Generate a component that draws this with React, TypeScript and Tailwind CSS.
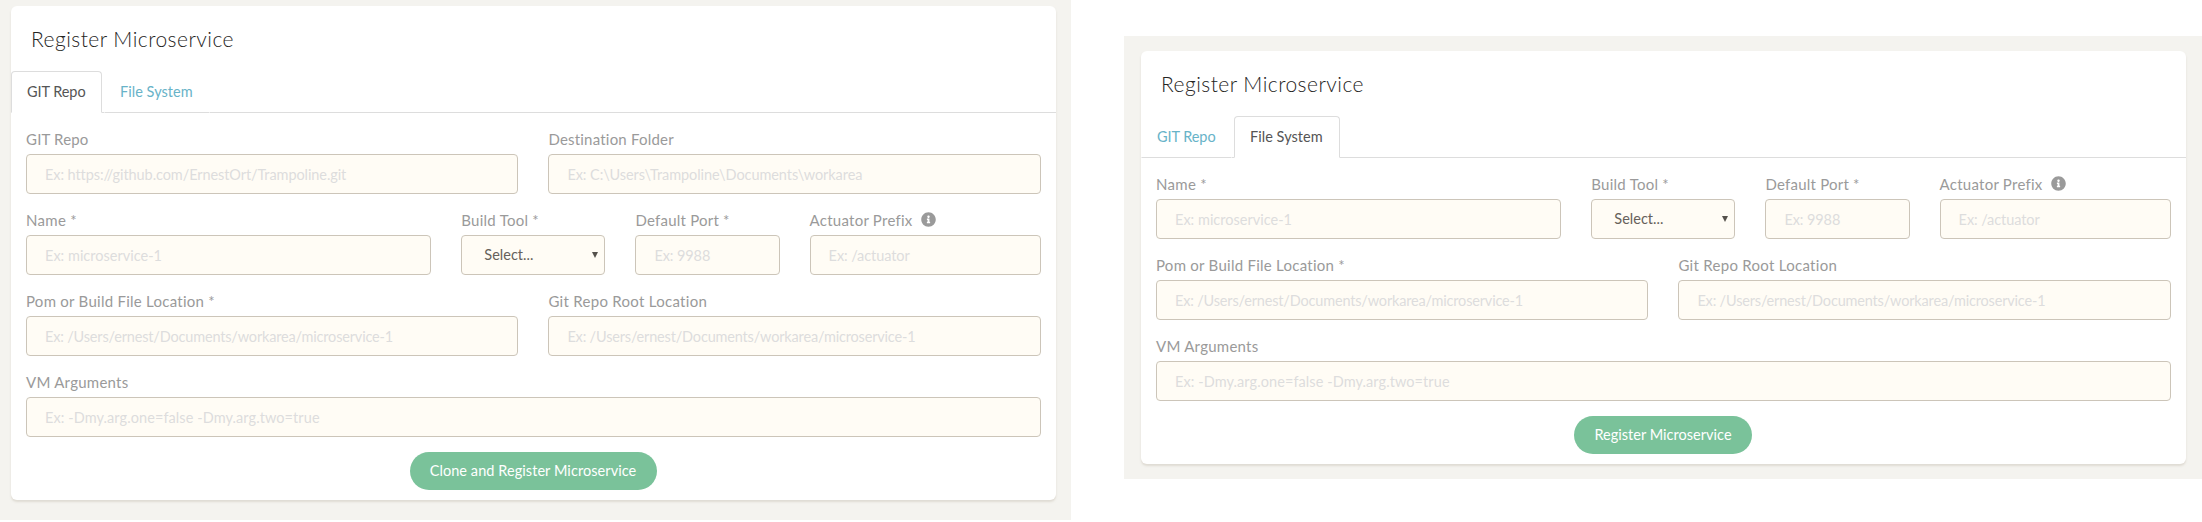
import { FaInfoCircle } from "react-icons/fa";

type FieldDef = {
  label: string;
  labelTracking: string;
  placeholder: string;
  tracking: string;
  span: string;
  select?: boolean;
  info?: boolean;
};

const repo: FieldDef = { label: "GIT Repo", labelTracking: "tracking-[0.175px]", placeholder: "Ex: https://github.com/ErnestOrt/Trampoline.git", tracking: "tracking-[-0.083px]", span: "col-span-6" };
const folder: FieldDef = { label: "Destination Folder", labelTracking: "tracking-[0.206px]", placeholder: "Ex: C:\\Users\\Trampoline\\Documents\\workarea", tracking: "tracking-[-0.068px]", span: "col-span-6" };
const name: FieldDef = { label: "Name *", labelTracking: "tracking-[0.3px]", placeholder: "Ex: microservice-1", tracking: "tracking-[0.005px]", span: "col-span-5" };
const tool: FieldDef = { label: "Build Tool *", labelTracking: "tracking-[0.25px]", placeholder: "Select...", tracking: "tracking-[0.005px]", span: "col-span-2", select: true };
const port: FieldDef = { label: "Default Port *", labelTracking: "tracking-[0.22px]", placeholder: "Ex: 9988", tracking: "tracking-[-0.1px]", span: "col-span-2" };
const prefix: FieldDef = { label: "Actuator Prefix", labelTracking: "tracking-[0.248px]", placeholder: "Ex: /actuator", tracking: "tracking-[-0.08px]", span: "col-span-3", info: true };
const pom: FieldDef = { label: "Pom or Build File Location *", labelTracking: "tracking-[0.26px]", placeholder: "Ex: /Users/ernest/Documents/workarea/microservice-1", tracking: "tracking-[-0.175px]", span: "col-span-6" };
const root: FieldDef = { ...pom, label: "Git Repo Root Location", labelTracking: "tracking-[0.291px]" };
const vm: FieldDef = { label: "VM Arguments", labelTracking: "tracking-[0.259px]", placeholder: "Ex: -Dmy.arg.one=false -Dmy.arg.two=true", tracking: "tracking-[0.083px]", span: "col-span-12" };

const common = [name, tool, port, prefix, pom, root, vm];

function Field({ f }: { f: FieldDef }) {
  return (
    <div className={`${f.span} h-[81px] px-[15px]`}>
      <div className={`flex h-[26px] items-center pb-[5px] text-[15px] leading-5 whitespace-nowrap text-[#9a9a9a] ${f.labelTracking}`}>
        <span>{f.label}</span>
        {f.info && <FaInfoCircle className="ml-2 size-[15px] shrink-0" />}
      </div>
      {f.select ? (
        <div className="flex h-10 items-center justify-between rounded border border-[#ccc5b9] bg-[#fffcf5] pr-[6px] pl-[22px] text-[14.5px] text-[#66615b]">
          <span className={f.tracking}>{f.placeholder}</span>
          <svg className="h-[6px] w-[6px]" viewBox="0 0 6 6" fill="#55514c">
            <path d="M0 0h6L3 6z" />
          </svg>
        </div>
      ) : (
        <input
          placeholder={f.placeholder}
          className={`block h-10 w-full rounded border border-[#ccc5b9] bg-[#fffcf5] px-[18px] text-[14.5px] placeholder:text-[#dddddd] placeholder:opacity-100 ${f.tracking}`}
        />
      )}
    </div>
  );
}

function Tab({ label, active, width, tracking }: { label: string; active: boolean; width: string; tracking: string }) {
  return (
    <div
      className={`h-[42px] border pt-[10px] pl-[15px] text-[14.5px] leading-5 whitespace-nowrap ${width} ${tracking} ${
        active ? "rounded-t border-[#dddddd] border-b-white bg-white text-[#555555]" : "border-transparent border-b-[#dddddd] text-[#68b3c8]"
      }`}
    >
      {label}
    </div>
  );
}

function Card({ active, fields, button }: { active: number; fields: FieldDef[]; button: React.ReactNode }) {
  return (
    <section className="w-[1045px] rounded-md bg-white shadow-[0_2px_2px_rgba(204,197,185,0.5)]">
      <h4 className="h-[65px] pt-[18px] pl-5 text-[21px] leading-[30px] font-light tracking-[0.46px] text-[#252422]">Register Microservice</h4>
      <div className="flex">
        <Tab label="GIT Repo" active={active === 0} width="w-[91px]" tracking="tracking-[-0.068px]" />
        <div className="w-[2px] border-b border-[#dddddd]" />
        <Tab label="File System" active={active === 1} width="w-[106px]" tracking="tracking-[0.036px]" />
        <div className="flex-1 border-b border-[#dddddd]" />
      </div>
      <div className="grid w-[1044.8px] grid-cols-12 pt-[15px]">
        {fields.map((f) => (
          <Field key={f.label} f={f} />
        ))}
      </div>
      <div className="flex justify-center pb-[10px]">{button}</div>
    </section>
  );
}

export default function App() {
  return (
    <main className="flex h-[522px] w-[2202px] items-start justify-between overflow-hidden bg-white font-['Lato',sans-serif]">
      <div className="h-[520px] w-[1071px] bg-[#f4f3ef] pt-[6px] pl-[11px]">
        <Card
          active={0}
          fields={[repo, folder, ...common]}
          button={<button className="mr-px h-[38px] w-[247px] rounded-[20px] bg-[#7ac29a] text-[14.5px] tracking-[0.068px] whitespace-nowrap text-white">Clone and Register Microservice</button>}
        />
      </div>
      <div className="mt-9 h-[443px] w-[1078px] bg-[#f4f3ef] pt-[15px] pl-[17px]">
        <Card
          active={1}
          fields={common}
          button={<button className="mr-px h-[38px] w-[178px] rounded-[20px] bg-[#7ac29a] text-[14.5px] tracking-[0.023px] whitespace-nowrap text-white">Register Microservice</button>}
        />
      </div>
    </main>
  );
}
